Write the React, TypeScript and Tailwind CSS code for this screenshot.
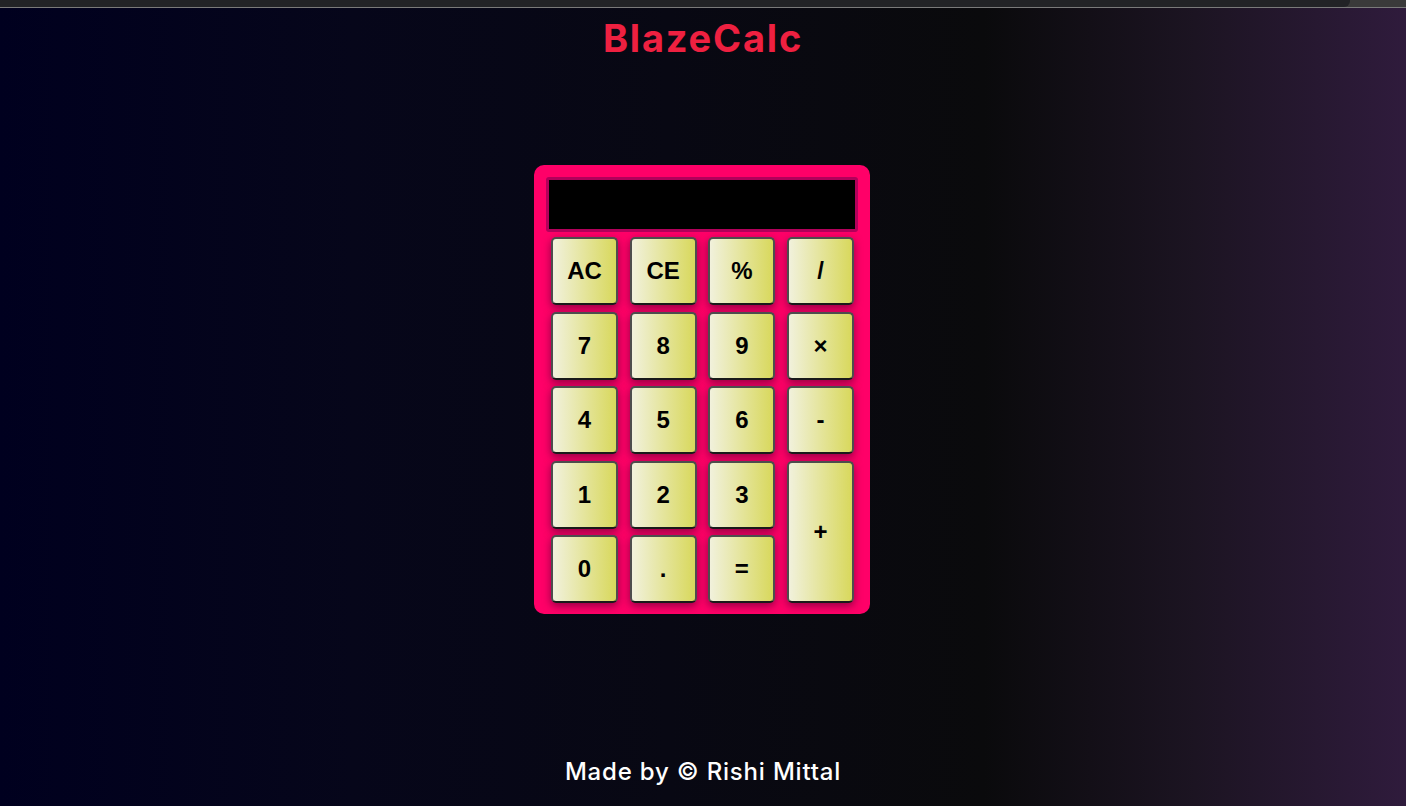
import React from "react";

const keys: { label: string; tall?: boolean }[] = [
  { label: "AC" }, { label: "CE" }, { label: "%" }, { label: "/" },
  { label: "7" }, { label: "8" }, { label: "9" }, { label: "×" },
  { label: "4" }, { label: "5" }, { label: "6" }, { label: "-" },
  { label: "1" }, { label: "2" }, { label: "3" }, { label: "+", tall: true },
  { label: "0" }, { label: "." }, { label: "=" },
];

export default function App() {
  return (
    <div className="min-h-screen flex flex-col bg-[linear-gradient(to_right,#00001f_0%,#06061a_25%,#0a0a0c_70%,#1c1422_85%,#2f1b3c_100%)]">
      <div className="h-[7px] flex bg-[#3a3a3a]">
        <div className="flex-1 bg-[#222326] rounded-br-[6px]" />
        <div className="w-[56px]" />
      </div>
      <div className="h-px bg-[#7a7a7a]" />
      <h1
        className="text-center text-[#ee2040] text-[38px] font-bold leading-none mt-[11px] tracking-[1.8px]"
        style={{ fontFamily: "Inter, 'Noto Sans', sans-serif" }}
      >
        BlazeCalc
      </h1>
      <div className="flex justify-center mt-[108px] pr-[2px]">
        <div className="w-[336px] h-[449px] bg-[#ff0068] rounded-[10px] p-[12px]">
          <div className="h-[55px] bg-black border-[3px] border-[#b3005b] rounded-[3px]" />
          <div
            className="mt-[5px] ml-[5px] grid grid-cols-[67px_67px_67px_67px] grid-rows-[68px_68px_68px_68px_68px] gap-x-[11.7px] gap-y-[6.5px]"
            style={{ fontFamily: "'Liberation Sans', Arial, sans-serif" }}
          >
            {keys.map((k) => (
              <div
                key={k.label}
                className={`${k.tall ? "row-span-2" : ""} flex items-center justify-center rounded-[5px] border-2 border-[#4d4d4d] border-b-[#1a1a1a] bg-[linear-gradient(to_right,#f1f1dc,#d8d85c)] text-black font-bold text-[24px] shadow-[0_3px_8px_rgba(110,0,55,0.75)]`}
              >
                {k.label}
              </div>
            ))}
          </div>
        </div>
      </div>
      <div className="mt-auto pb-[22px] text-center">
        <p
          className="text-white text-[24px] font-medium leading-none tracking-[0.8px]"
          style={{ fontFamily: "Inter, 'Noto Sans', sans-serif" }}
        >
          Made by © Rishi Mittal
        </p>
      </div>
    </div>
  );
}
